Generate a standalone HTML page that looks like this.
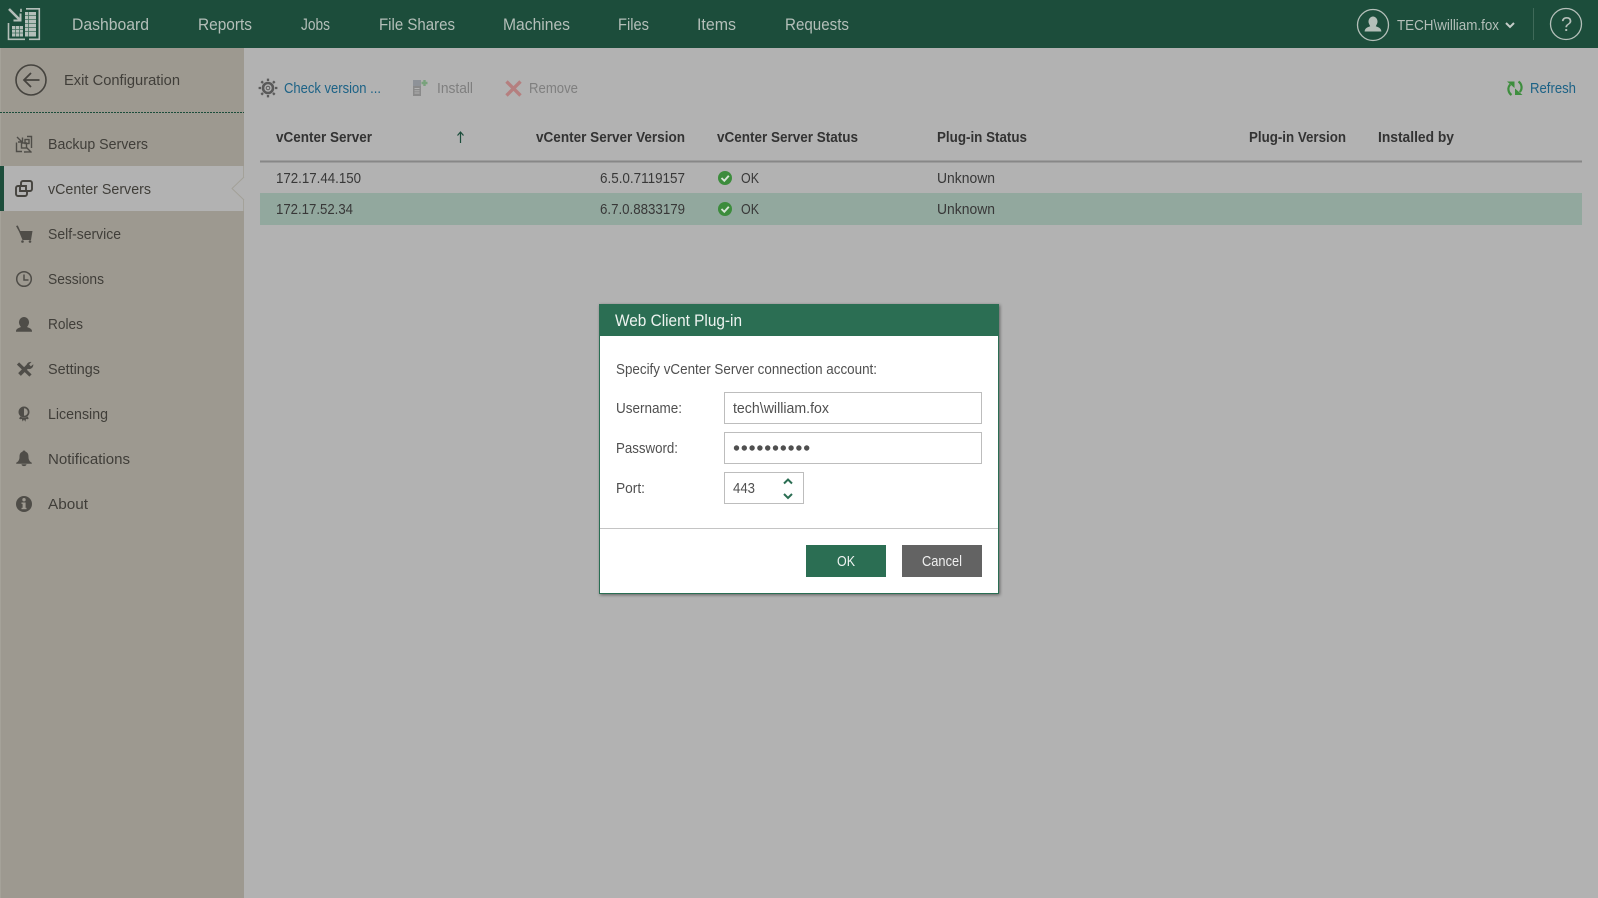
<!DOCTYPE html>
<html><head><meta charset="utf-8"><title>Web Client Plug-in</title>
<style>
html,body{margin:0;padding:0;width:1598px;height:898px;overflow:hidden;background:#b2b2b2}
svg{display:block}
text{font-family:"Liberation Sans",sans-serif;font-size:14.5px;fill:#383838}
.n{font-size:16.5px;fill:#b4bfb9}
.s{font-size:15px;fill:#403e39}
.b{font-weight:bold;fill:#333}
.l{fill:#1c6286}
.g{fill:#7f7f7f}
.d{fill:#505050;font-size:14.5px}
</style></head><body>
<svg width="1598" height="898" viewBox="0 0 1598 898" xmlns="http://www.w3.org/2000/svg">
<defs><filter id="sh" x="-5%" y="-5%" width="110%" height="110%"><feDropShadow dx="1" dy="1" stdDeviation="1.5" flood-color="#000" flood-opacity=".45"/></filter></defs>
<rect width="1598" height="898" fill="#b2b2b2"/>
<rect x="0" y="48" width="244" height="850" fill="#9d9990"/>
<rect x="0" y="48" width="1" height="850" fill="#a5a299"/>
<rect width="1598" height="48" fill="#1c4d3b"/>

<!-- logo -->
<g fill="none" stroke="#b4bfb9" stroke-width="1.6">
<path d="M9 9L20 20" stroke-width="2.600"/><path d="M13.500 20.500H20.500V13.500" stroke-width="2"/>
<path d="M8.500 23V39.300H25M21 8.800V12M26 8.800H39.300V39.300H29"/>
</g>
<g fill="#b4bfb9"><rect x="12" y="26" width="11" height="10.500"/><rect x="25" y="12" width="11" height="24.500"/></g>
<g stroke="#3f6d5b" stroke-width=".8"><path d="M12 29.500H23M12 33H23M15.500 26V36.500M19.500 26V36.500M25 15.500H36M25 19.500H36M25 23.500H36M25 27.500H36M25 31.500H36M28.500 12V36.500"/></g>

<!-- top nav -->
<text class="n" x="72" y="30" textLength="77" lengthAdjust="spacingAndGlyphs">Dashboard</text>
<text class="n" x="198" y="30" textLength="54" lengthAdjust="spacingAndGlyphs">Reports</text>
<text class="n" x="301" y="30" textLength="29" lengthAdjust="spacingAndGlyphs">Jobs</text>
<text class="n" x="379" y="30" textLength="76" lengthAdjust="spacingAndGlyphs">File Shares</text>
<text class="n" x="503" y="30" textLength="67" lengthAdjust="spacingAndGlyphs">Machines</text>
<text class="n" x="618" y="30" textLength="31" lengthAdjust="spacingAndGlyphs">Files</text>
<text class="n" x="697" y="30" textLength="39" lengthAdjust="spacingAndGlyphs">Items</text>
<text class="n" x="785" y="30" textLength="64" lengthAdjust="spacingAndGlyphs">Requests</text>

<circle cx="1373" cy="25" r="15.500" fill="none" stroke="#b4bfb9" stroke-width="1.300"/>
<path d="M1373 16.500a4.600 5 0 0 1 4.300 6.500c-.5 1.500-1.200 2.500-1.500 3.300 2.500 1 5.200 1.500 5.600 5.200h-16.800c.4-3.700 3.100-4.200 5.600-5.200-.3-.8-1-1.800-1.500-3.300a4.600 5 0 0 1 4.300-6.500z" fill="#b4bfb9"/>
<text x="1397" y="30" textLength="102" lengthAdjust="spacingAndGlyphs" style="font-size:14.500px;fill:#b4bfb9">TECH\william.fox</text>
<path d="M1506 23l4 4 4-4" fill="none" stroke="#c4ccc8" stroke-width="2"/>
<rect x="1533" y="8" width="1" height="32" fill="#3f6a59"/>
<circle cx="1566" cy="24" r="15.500" fill="none" stroke="#b4bfb9" stroke-width="1.300"/>
<text x="1561" y="31" style="font-size:20px;fill:#b4bfb9">?</text>

<!-- sidebar -->
<circle cx="31" cy="80" r="15" fill="none" stroke="#45433e" stroke-width="1.600"/>
<path d="M39.500 80H24M31 73l-7 7 7 7" fill="none" stroke="#45433e" stroke-width="1.800"/>
<text class="s" x="64" y="85" textLength="116" lengthAdjust="spacingAndGlyphs">Exit Configuration</text>
<path d="M0 112.500H244" stroke="#1c4d3b" stroke-width="1" stroke-dasharray="2 1"/>

<rect x="0" y="166" width="244" height="45" fill="#b2b2b2"/>
<rect x="0" y="166" width="4" height="45" fill="#1c4d3b"/>
<path d="M244 177L232 188.500L244 200" fill="#b2b2b2" stroke="#a2a097" stroke-width=".9"/>
<rect x="243" y="166" width="1" height="11" fill="#a4a29a"/><rect x="243" y="200" width="1" height="11" fill="#a4a29a"/>

<g fill="none" stroke="#4f4d48" stroke-width="1.400">
<!-- backup servers -->
<path d="M16.500 142.500V151.500H22M27 136.500H31.500V148M17 137l5 5M18 142h4.500v-4.500M24 152l7-.2M26.500 147.500l5 5"/>
<rect x="21.500" y="143" width="5" height="5"/><rect x="25" y="139.500" width="4" height="4"/>
<!-- vcenter -->
<path d="M21 186v-3a2 2 0 0 1 2-2h7a2 2 0 0 1 2 2v6a2 2 0 0 1-2 2h-3v3a2 2 0 0 1-2 2h-7a2 2 0 0 1-2-2v-6a2 2 0 0 1 2-2h8v5h-6v-5" stroke-width="1.900" stroke="#45433e"/>
<!-- clock -->
<circle cx="24" cy="279" r="7.300" stroke-width="1.500"/><path d="M24 274.500V280H28.500" stroke-width="1.500"/>
<!-- settings -->
<path d="M18 363.500L30.500 375.500" stroke-width="3.200"/>
<path d="M19.500 374.500L28 366" stroke-width="3.800"/>
</g>
<g fill="#4f4d48">
<!-- cart -->
<path d="M16 226l1.800-.5 2.500 5.500h12.200l-1.500 9h-8.500L19 231.500z"/><circle cx="22.500" cy="241.500" r="1.300"/><circle cx="30" cy="241.500" r="1.300"/>
<!-- roles -->
<path d="M24 317a5 5.500 0 0 1 5 6c-.3 1.800-1.200 3-2 4 2.500 1 4.700 1.600 5 4v.7H16v-.7c.3-2.400 2.500-3 5-4-.8-1-1.700-2.200-2-4a5 5.500 0 0 1 5-6z"/>
<!-- settings head -->
<path d="M26.500 367c-.6-3 2-5.500 5-5l-2.400 2.400 1.700 2 2.500-2.200c.3 3-2.300 5.300-5 4.800z"/>
<!-- licensing -->
<path d="M24 406.500a5.500 5.500 0 1 0 .01 0zM24 408.200a3.800 3.800 0 0 1 0 7.600z" fill-rule="evenodd"/>
<path d="M20.300 416.500c2.400 1.600 5 1.600 7.400 0 .4.700.7 1.300 1 2l-1 .8-1.700-.3-.6 2.700-1.400-2.200-1.400 2-.7-2.500-1.800.3-1-.8z"/>
<!-- bell -->
<path d="M24 450.500c1 0 1.500.6 1.500 1.200 2.500.7 3 2.900 3 5.300 0 2.600 1 4.500 3.300 5.800v.9H16.200v-.9c2.300-1.300 3.300-3.200 3.300-5.800 0-2.400.5-4.600 3-5.300 0-.6.500-1.200 1.500-1.200z"/><path d="M21.500 464.300h5a2.500 1.800 0 0 1-5 0z"/>
<!-- info -->
<circle cx="24" cy="504" r="8"/>
</g>
<rect x="22.600" y="502.500" width="3" height="6.500" fill="#9d9990"/><rect x="21.500" y="502.500" width="3" height="1.400" fill="#9d9990"/><rect x="21.500" y="507.800" width="5" height="1.400" fill="#9d9990"/><circle cx="24" cy="499.700" r="1.700" fill="#9d9990"/>

<text class="s" x="48" y="149" textLength="100" lengthAdjust="spacingAndGlyphs">Backup Servers</text>
<text class="s" x="48" y="194" textLength="103" lengthAdjust="spacingAndGlyphs">vCenter Servers</text>
<text class="s" x="48" y="239" textLength="73" lengthAdjust="spacingAndGlyphs">Self-service</text>
<text class="s" x="48" y="284" textLength="56" lengthAdjust="spacingAndGlyphs">Sessions</text>
<text class="s" x="48" y="329" textLength="35" lengthAdjust="spacingAndGlyphs">Roles</text>
<text class="s" x="48" y="374" textLength="52" lengthAdjust="spacingAndGlyphs">Settings</text>
<text class="s" x="48" y="419" textLength="60" lengthAdjust="spacingAndGlyphs">Licensing</text>
<text class="s" x="48" y="464" textLength="82" lengthAdjust="spacingAndGlyphs">Notifications</text>
<text class="s" x="48" y="509" textLength="40" lengthAdjust="spacingAndGlyphs">About</text>

<!-- toolbar -->
<g fill="none" stroke="#5a5a5a">
<circle cx="268" cy="88" r="5" stroke-width="2.600"/><circle cx="268" cy="88" r="1.800" stroke-width="1"/>
<path d="M268 81v-2.400M268 97.400V95M261 88h-2.400M277.400 88H275M263 83l-1.700-1.700M274.700 94.700L273 93M273 83l1.700-1.700M261.300 94.700L263 93" stroke-width="2.300"/>
</g>
<text class="l" x="284" y="93" textLength="97" lengthAdjust="spacingAndGlyphs">Check version ...</text>
<rect x="413" y="80" width="8" height="6" fill="#8e9298"/><rect x="413" y="86" width="8" height="10" fill="#8a8a8a"/>
<path d="M414.500 88.500h5M414.500 90.800h5M414.500 93h5" stroke="#b2b2b2" stroke-width=".9"/>
<path d="M424.500 80v6M421.500 83h6" stroke="#79a27c" stroke-width="2.400"/>
<text class="g" x="437" y="93" textLength="36" lengthAdjust="spacingAndGlyphs">Install</text>
<path d="M506.500 81.500l14 14M520.500 81.500l-14 14" stroke="#b57f7f" stroke-width="3.400"/>
<text class="g" x="529" y="93" textLength="49" lengthAdjust="spacingAndGlyphs">Remove</text>
<g fill="none" stroke="#3e8e3e" stroke-width="2.200">
<path d="M1511.500 95c-3.500-2.500-4.200-7.500-1.200-10.500M1518.500 81.500c3.500 2.500 4.200 7.500 1.200 10.500"/>
</g>
<path d="M1507 81.500h7.500v6.500zM1522.500 95h-7.500v-6.500z" fill="#3e8e3e"/>
<text class="l" x="1530" y="93" textLength="46" lengthAdjust="spacingAndGlyphs">Refresh</text>

<!-- table -->
<text class="b" x="276" y="142" textLength="96" lengthAdjust="spacingAndGlyphs">vCenter Server</text>
<path d="M460.500 143V132M457.500 135.500l3-3.500 3 3.500" fill="none" stroke="#1c4d3b" stroke-width="1.200"/>
<text class="b" x="536" y="142" textLength="149" lengthAdjust="spacingAndGlyphs">vCenter Server Version</text>
<text class="b" x="717" y="142" textLength="141" lengthAdjust="spacingAndGlyphs">vCenter Server Status</text>
<text class="b" x="937" y="142" textLength="90" lengthAdjust="spacingAndGlyphs">Plug-in Status</text>
<text class="b" x="1249" y="142" textLength="97" lengthAdjust="spacingAndGlyphs">Plug-in Version</text>
<text class="b" x="1378" y="142" textLength="76" lengthAdjust="spacingAndGlyphs">Installed by</text>
<rect x="260" y="160.500" width="1322" height="2" fill="#878787"/>
<rect x="260" y="193" width="1322" height="32" fill="#92a89e"/>

<text x="276" y="183" textLength="85" lengthAdjust="spacingAndGlyphs">172.17.44.150</text>
<text x="600" y="183" textLength="85" lengthAdjust="spacingAndGlyphs">6.5.0.7119157</text>
<circle cx="725" cy="178" r="7" fill="#3c8c3c"/><path d="M721.500 178l2.800 2.800 4.500-5" fill="none" stroke="#d8e4d8" stroke-width="1.900"/>
<text x="741" y="183" textLength="18" lengthAdjust="spacingAndGlyphs">OK</text>
<text x="937" y="183" textLength="58" lengthAdjust="spacingAndGlyphs">Unknown</text>

<text x="276" y="214" textLength="77" lengthAdjust="spacingAndGlyphs">172.17.52.34</text>
<text x="600" y="214" textLength="85" lengthAdjust="spacingAndGlyphs">6.7.0.8833179</text>
<circle cx="725" cy="209" r="7" fill="#3c8c3c"/><path d="M721.500 209l2.800 2.800 4.500-5" fill="none" stroke="#d8e4d8" stroke-width="1.900"/>
<text x="741" y="214" textLength="18" lengthAdjust="spacingAndGlyphs">OK</text>
<text x="937" y="214" textLength="58" lengthAdjust="spacingAndGlyphs">Unknown</text>

<!-- dialog -->
<rect x="599.500" y="304.500" width="399" height="289" fill="#fff" stroke="#2b6e53" stroke-width="1" filter="url(#sh)"/>
<rect x="599" y="304" width="400" height="32" fill="#2b6e53"/>
<text x="615" y="326" textLength="127" lengthAdjust="spacingAndGlyphs" style="font-size:16.500px;fill:#eef3f0">Web Client Plug-in</text>
<text class="d" x="616" y="374" textLength="261" lengthAdjust="spacingAndGlyphs">Specify vCenter Server connection account:</text>
<text class="d" x="616" y="413" textLength="66" lengthAdjust="spacingAndGlyphs">Username:</text>
<text class="d" x="616" y="453" textLength="62" lengthAdjust="spacingAndGlyphs">Password:</text>
<text class="d" x="616" y="493" textLength="29" lengthAdjust="spacingAndGlyphs">Port:</text>
<g fill="#fff" stroke="#bdbdbd" stroke-width="1">
<rect x="724.500" y="392.500" width="257" height="31"/>
<rect x="724.500" y="432.500" width="257" height="31"/>
<rect x="724.500" y="472.500" width="79" height="31"/>
</g>
<text class="d" x="733" y="413" textLength="96" lengthAdjust="spacingAndGlyphs">tech\william.fox</text>
<g fill="#505050">
<circle cx="736.500" cy="448" r="2.700"/><circle cx="744.300" cy="448" r="2.700"/><circle cx="752.100" cy="448" r="2.700"/><circle cx="759.900" cy="448" r="2.700"/><circle cx="767.700" cy="448" r="2.700"/><circle cx="775.500" cy="448" r="2.700"/><circle cx="783.300" cy="448" r="2.700"/><circle cx="791.100" cy="448" r="2.700"/><circle cx="798.900" cy="448" r="2.700"/><circle cx="806.700" cy="448" r="2.700"/>
</g>
<text class="d" x="733" y="493" textLength="22" lengthAdjust="spacingAndGlyphs">443</text>
<path d="M784 483.500l4-4 4 4M784 494l4 4 4-4" fill="none" stroke="#2b6e53" stroke-width="2"/>
<rect x="600" y="528" width="398" height="1" fill="#c4c4c4"/>
<rect x="806" y="545" width="80" height="32" fill="#2b6e53"/>
<text x="837" y="566" textLength="18" lengthAdjust="spacingAndGlyphs" style="fill:#f0f4f2">OK</text>
<rect x="902" y="545" width="80" height="32" fill="#636363"/>
<text x="922" y="566" textLength="40" lengthAdjust="spacingAndGlyphs" style="fill:#f0f0f0">Cancel</text>
</svg>
</body></html>
